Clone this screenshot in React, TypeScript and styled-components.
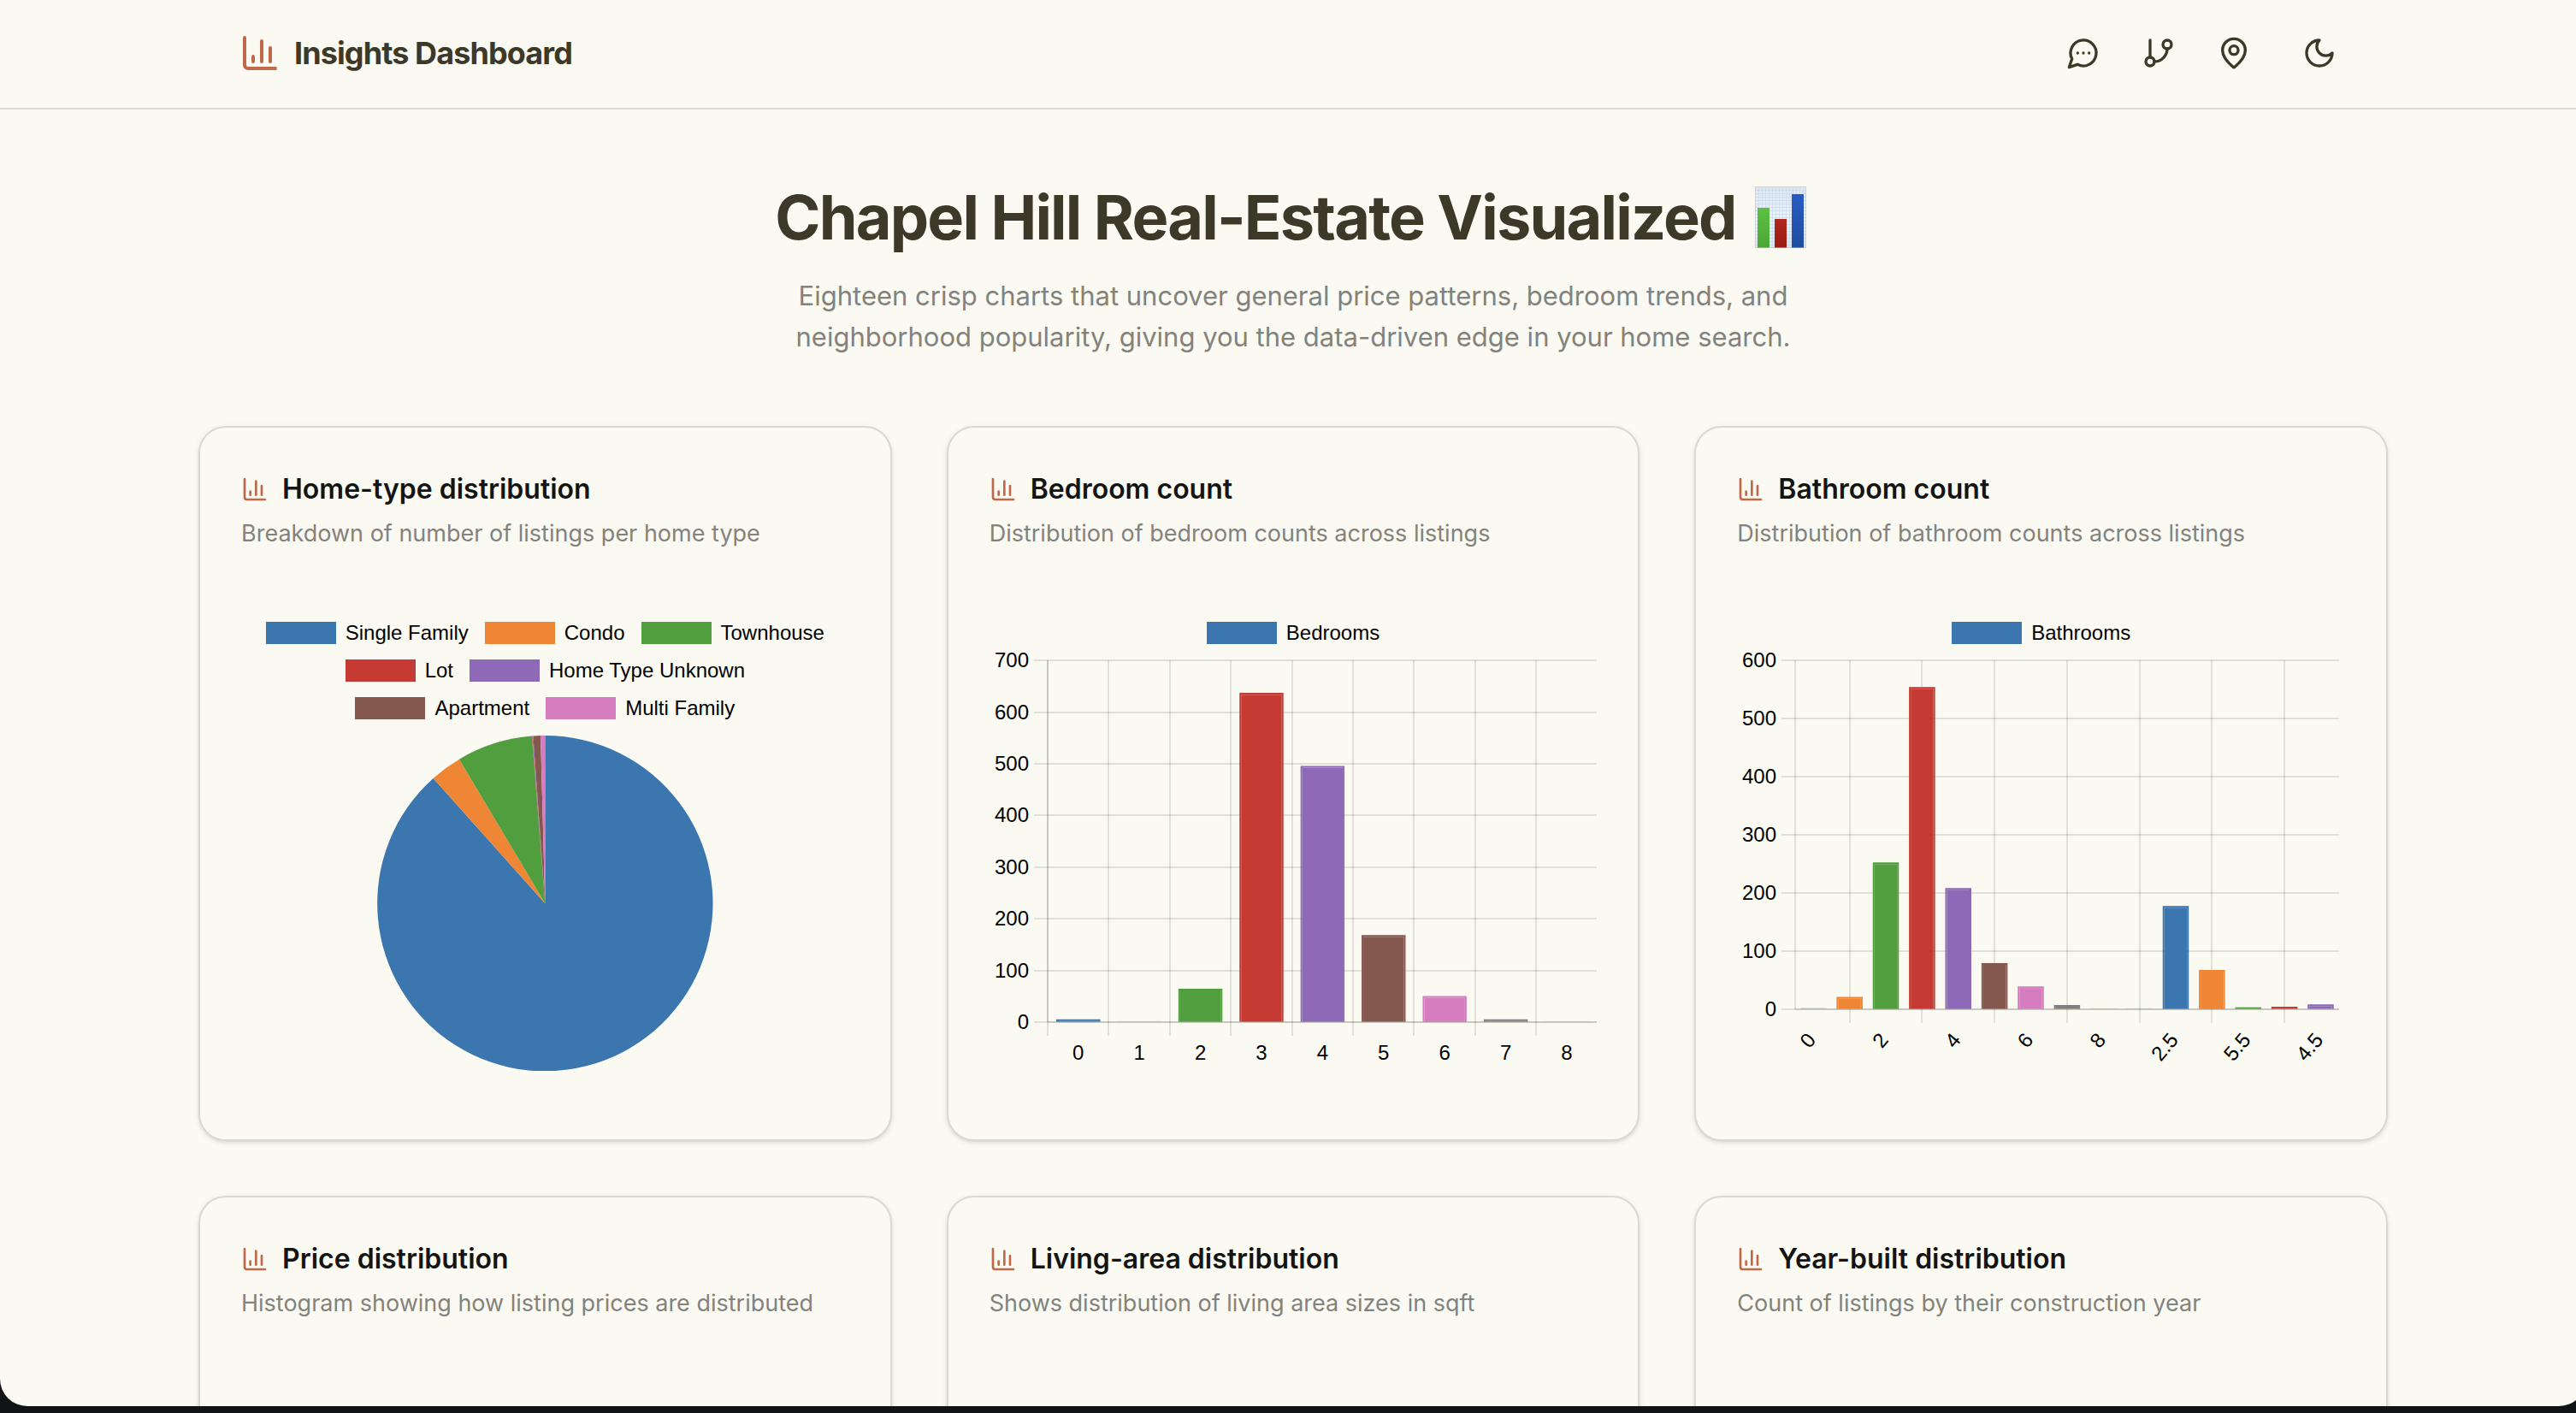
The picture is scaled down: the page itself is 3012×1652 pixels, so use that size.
import React from "react";
import styled, { createGlobalStyle } from "styled-components";

const color = {
  page: "#fafaf2",
  line: "#dad9d1",
  heading: "#3d3929",
  cardHeading: "#141413",
  muted: "#83827d",
  accent: "#c0694a",
};

const palette = [
  "#3b76af",
  "#ef8636",
  "#519e3e",
  "#c53a32",
  "#8d69b8",
  "#84584e",
  "#d57dbe",
  "#7f7f7f",
  "#bcbd45",
  "#56bbcc",
];

const GlobalStyle = createGlobalStyle`
  *, *::before, *::after { box-sizing: border-box; }
  html, body { margin: 0; }
  body {
    background: #111314;
    font-family: Inter, "Noto Sans", sans-serif;
    overflow: hidden;
  }
  h1, h2, p { margin: 0; }
`;

const Desktop = styled.div`
  height: 100vh;
  padding-bottom: 8px;
  overflow: hidden;
  background: #111314;
`;

const BrowserWindow = styled.div`
  width: calc(100% + 12px);
  height: 100%;
  overflow: hidden;
  border-radius: 0 0 32px 32px;
  background: ${color.page};
`;

const Header = styled.header`
  border-bottom: 2px solid ${color.line};
`;

const HeaderInner = styled.div`
  display: flex;
  align-items: center;
  justify-content: space-between;
  max-width: 2560px;
  margin: 0 auto;
  padding: 38px 48px 40px;
`;

const Brand = styled.a`
  display: flex;
  align-items: center;
  gap: 16px;
  color: ${color.heading};
  font-size: 36px;
  font-weight: 700;
  line-height: 48px;
  letter-spacing: -0.025em;
  text-decoration: none;
`;

const Nav = styled.nav`
  display: flex;
  align-items: center;
  gap: 48px;
`;

const NavLink = styled.a`
  display: flex;
  color: ${color.heading};
`;

const ThemeButton = styled.button`
  display: flex;
  padding: 0 12px;
  border: 0;
  background: none;
  color: ${color.heading};
  cursor: pointer;
`;

const Glyph = styled.svg<{ $size: number; $accent?: boolean }>`
  flex: none;
  width: ${(p) => p.$size}px;
  height: ${(p) => p.$size}px;
  color: ${(p) => (p.$accent ? color.accent : "inherit")};
  fill: none;
  stroke: currentColor;
  stroke-width: 2;
  stroke-linecap: round;
  stroke-linejoin: round;
`;

const Main = styled.main`
  max-width: 2560px;
  margin: 0 auto;
  padding-top: 86px;
`;

const Hero = styled.section`
  display: flex;
  flex-direction: column;
  align-items: center;
  gap: 28px;
  margin-bottom: 80px;
  text-align: center;
`;

const HeroTitle = styled.h1`
  display: flex;
  align-items: center;
  gap: 16px;
  color: ${color.heading};
  font-size: 72px;
  font-weight: 700;
  line-height: 80px;
  letter-spacing: -0.025em;
`;

const ChartEmoji = styled.svg`
  flex: none;
  width: 72px;
  height: 72px;
`;

const HeroText = styled.p`
  max-width: 1200px;
  color: ${color.muted};
  font-size: 31px;
  line-height: 48px;
`;

const CardGrid = styled.div`
  display: grid;
  grid-template-columns: repeat(3, minmax(0, 1fr));
  gap: 64px;
`;

const Card = styled.article`
  min-height: 836px;
  padding: 56px 48px 80px;
  border: 2px solid ${color.line};
  border-radius: 32px;
  background: ${color.page};
  box-shadow: 0 2px 6px rgba(0, 0, 0, 0.1), 0 2px 4px -2px rgba(0, 0, 0, 0.1);
`;

const CardTitle = styled.h2`
  display: flex;
  align-items: center;
  gap: 16px;
  margin-bottom: 16px;
  color: ${color.cardHeading};
  font-size: 32px;
  font-weight: 600;
  line-height: 32px;
`;

const CardText = styled.p`
  color: ${color.muted};
  font-size: 27px;
  line-height: 40px;
`;

const Figure = styled.figure`
  margin: 83px 0 0;
`;

const Legend = styled.ul`
  display: flex;
  flex-wrap: wrap;
  justify-content: center;
  gap: 18px 19px;
  margin: 0;
  padding: 0 20px;
  list-style: none;
`;

const LegendItem = styled.li<{ $color: string }>`
  display: flex;
  align-items: center;
  gap: 11px;
  color: #000;
  font-family: "Liberation Sans", Arial, sans-serif;
  font-size: 24px;
  line-height: 26px;

  &::before {
    content: "";
    width: 82px;
    height: 26px;
    background: ${(p) => p.$color};
  }
`;

const Plot = styled.svg<{ $spaced?: boolean }>`
  display: block;
  width: 100%;
  margin-top: ${(p) => (p.$spaced ? "19px" : "0")};
  overflow: hidden;

  text {
    fill: #000;
    font-family: "Liberation Sans", Arial, sans-serif;
    font-size: 24px;
  }
`;

const GridLine = styled.line<{ $strong?: boolean }>`
  stroke: rgba(0, 0, 0, ${(p) => (p.$strong ? 0.2 : 0.1)});
  stroke-width: 2;
  shape-rendering: crispEdges;
`;

function ColumnIcon({ size }: { size: number }) {
  return (
    <Glyph $size={size} $accent viewBox="0 0 24 24" aria-hidden="true">
      <path d="M3 3v16a2 2 0 0 0 2 2h16" />
      <path d="M18 17V9" />
      <path d="M13 17V5" />
      <path d="M8 17v-3" />
    </Glyph>
  );
}

function BarEmoji() {
  const rules = [4, 8, 12, 16, 20, 24, 28, 32, 36, 40, 44, 48, 52, 56, 60, 64, 68];
  return (
    <ChartEmoji viewBox="0 0 72 72" role="img" aria-label="bar chart">
      <defs>
        <linearGradient id="sheet" x1="0" y1="0" x2="0" y2="1">
          <stop offset="0" stopColor="#e2e6e8" />
          <stop offset="0.5" stopColor="#f0f3f8" />
          <stop offset="1" stopColor="#dfe3ea" />
        </linearGradient>
        <linearGradient id="green" x1="0" y1="0" x2="0" y2="1">
          <stop offset="0" stopColor="#5cc140" />
          <stop offset="1" stopColor="#4ca637" />
        </linearGradient>
        <linearGradient id="red" x1="0" y1="0" x2="0" y2="1">
          <stop offset="0" stopColor="#b0261c" />
          <stop offset="1" stopColor="#981c15" />
        </linearGradient>
        <linearGradient id="blue" x1="0" y1="0" x2="0" y2="1">
          <stop offset="0" stopColor="#285cc4" />
          <stop offset="1" stopColor="#1f4d9f" />
        </linearGradient>
      </defs>
      <rect x="6" y="0" width="60" height="72" fill="url(#sheet)" />
      <g stroke="#cfdeee" strokeWidth="1">
        {rules.map((y) => (
          <path key={y} d={`M6 ${y}.5H66`} />
        ))}
        {[10, 14, 18, 22, 26, 30, 34, 38, 42, 46, 50, 54, 58, 62].map((x) => (
          <path key={x} d={`M${x}.5 0V72`} />
        ))}
      </g>
      <rect x="6.5" y="0.5" width="59" height="71" fill="none" stroke="#d0d2d2" />
      <rect x="9" y="25" width="14" height="46.5" fill="url(#green)" />
      <rect x="29" y="38" width="14" height="33.5" fill="url(#red)" />
      <rect x="49" y="9" width="14" height="62.5" fill="url(#blue)" />
    </ChartEmoji>
  );
}

const homeTypes = [
  { name: "Single Family", share: 0.8839 },
  { name: "Condo", share: 0.0306 },
  { name: "Townhouse", share: 0.0729 },
  { name: "Lot", share: 0.0005 },
  { name: "Home Type Unknown", share: 0.0008 },
  { name: "Apartment", share: 0.007 },
  { name: "Multi Family", share: 0.0043 },
];

function PieChart() {
  const cx = 355;
  const r = 196;
  let turn = 0;
  const slices = homeTypes.map((t, i) => {
    const a0 = turn * 2 * Math.PI;
    turn += t.share;
    const a1 = turn * 2 * Math.PI;
    const at = (a: number) => `${cx + r * Math.sin(a)} ${r - r * Math.cos(a)}`;
    return (
      <path
        key={t.name}
        fill={palette[i]}
        d={`M${cx} ${r}L${at(a0)}A${r} ${r} 0 ${t.share > 0.5 ? 1 : 0} 1 ${at(a1)}Z`}
      />
    );
  });
  return (
    <Figure>
      <Legend>
        {homeTypes.map((t, i) => (
          <LegendItem key={t.name} $color={palette[i]}>
            {t.name}
          </LegendItem>
        ))}
      </Legend>
      <Plot $spaced viewBox="0 0 710 392" role="img" aria-label="Home types">
        {slices}
      </Plot>
    </Figure>
  );
}

type BarChartProps = {
  label: string;
  values: number[];
  ticks: string[];
  max: number;
  right: number;
  base: number;
  tilted?: boolean;
};

function BarChart({ label, values, ticks, max, right, base, tilted }: BarChartProps) {
  const left = 68;
  const top = 19;
  const column = (right - left) / values.length;
  const barWidth = column * 0.72;
  const yOf = (v: number) => base - (v / max) * (base - top);
  const levels = Array.from({ length: max / 100 + 1 }, (_, i) => i * 100);
  const columnLines = tilted
    ? [1.5, 3.5, 5.5, 7.5, 9.5, 11.5, 13.5]
    : values.map((_, i) => i + 1);

  return (
    <Figure>
      <Legend>
        <LegendItem $color={palette[0]}>{label}</LegendItem>
      </Legend>
      <Plot viewBox="0 0 710 499" role="img" aria-label={label}>
        {levels.slice(1).map((v) => (
          <GridLine key={v} x1={left - 16} x2={right} y1={yOf(v)} y2={yOf(v)} />
        ))}
        <GridLine x1={left - 16} x2={left} y1={base} y2={base} />
        {columnLines.map((n) => {
          const x = left + n * column;
          return <GridLine key={n} x1={x} x2={x} y1={top} y2={base + 16} />;
        })}
        <GridLine $strong={!tilted} x1={left} x2={left} y1={top} y2={base} />
        {!tilted && <GridLine x1={left} x2={left} y1={base} y2={base + 16} />}
        {values.map((v, i) => {
          const x0 = left + (i + 0.5) * column - barWidth / 2;
          const x1 = x0 + barWidth;
          const y = yOf(v);
          const b = base - 1;
          const fill = palette[i % palette.length];
          if (v < 3) {
            return (
              <rect
                key={i}
                x={x0}
                y={b - 1}
                width={barWidth}
                height={1}
                fill={fill}
                opacity={v * 0.15}
              />
            );
          }
          return (
            <g key={i} fill={fill}>
              {b - y > 2 && <path d={`M${x0 + 2} ${y + 2}H${x1 - 2}V${b}H${x0 + 2}Z`} />}
              {b - y > 2 ? (
                <path d={`M${x0} ${b}V${y}H${x1}V${b}H${x1 - 2}V${y + 2}H${x0 + 2}V${b}Z`} />
              ) : (
                <path d={`M${x0} ${b}V${y}H${x1}V${b}Z`} />
              )}
            </g>
          );
        })}
        <GridLine $strong x1={left} x2={right} y1={base} y2={base} />
        {levels.map((v) => (
          <text key={v} x={left - 22} y={yOf(v) + 8} textAnchor="end">
            {v}
          </text>
        ))}
        {ticks.map((t, i) => {
          const x = left + (tilted ? i * 2 + 0.5 : i + 0.5) * column;
          return tilted ? (
            <text key={t} textAnchor="end" transform={`translate(${x + 4} ${base + 36}) rotate(-50)`}>
              {t}
            </text>
          ) : (
            <text key={t} x={x} y={base + 44} textAnchor="middle">
              {t}
            </text>
          );
        })}
      </Plot>
    </Figure>
  );
}

type ChartCardProps = { title: string; text: string; children?: React.ReactNode };

function ChartCard({ title, text, children }: ChartCardProps) {
  return (
    <Card>
      <CardTitle>
        <ColumnIcon size={32} />
        {title}
      </CardTitle>
      <CardText>{text}</CardText>
      {children}
    </Card>
  );
}

export default function App() {
  return (
    <Desktop>
      <GlobalStyle />
      <BrowserWindow>
        <Header>
          <HeaderInner>
            <Brand href="#">
              <ColumnIcon size={48} />
              Insights Dashboard
            </Brand>
            <Nav>
              <NavLink href="#chat" aria-label="Chat">
                <Glyph $size={40} viewBox="0 0 24 24">
                  <path d="M7.9 20A9 9 0 1 0 4 16.1L2 22Z" />
                  <path d="M8 12h.01" />
                  <path d="M12 12h.01" />
                  <path d="M16 12h.01" />
                </Glyph>
              </NavLink>
              <NavLink href="#graph" aria-label="Graph">
                <Glyph $size={40} viewBox="0 0 24 24">
                  <path d="M6 3v12" />
                  <circle cx="18" cy="6" r="3" />
                  <circle cx="6" cy="18" r="3" />
                  <path d="M18 9a9 9 0 0 1-9 9" />
                </Glyph>
              </NavLink>
              <NavLink href="#map" aria-label="Map">
                <Glyph $size={40} viewBox="0 0 24 24">
                  <path d="M20 10c0 4.993-5.539 10.193-7.399 11.799a1 1 0 0 1-1.202 0C9.539 20.193 4 14.993 4 10a8 8 0 0 1 16 0" />
                  <circle cx="12" cy="10" r="3" />
                </Glyph>
              </NavLink>
              <ThemeButton type="button" aria-label="Toggle theme">
                <Glyph $size={40} viewBox="0 0 24 24">
                  <path d="M12 3a6 6 0 0 0 9 9 9 9 0 1 1-9-9Z" />
                </Glyph>
              </ThemeButton>
            </Nav>
          </HeaderInner>
        </Header>

        <Main>
          <Hero>
            <HeroTitle>
              Chapel Hill Real-Estate Visualized
              <BarEmoji />
            </HeroTitle>
            <HeroText>
              Eighteen crisp charts that uncover general price patterns, bedroom trends, and
              neighborhood popularity, giving you the data-driven edge in your home search.
            </HeroText>
          </Hero>

          <CardGrid>
            <ChartCard
              title="Home-type distribution"
              text="Breakdown of number of listings per home type"
            >
              <PieChart />
            </ChartCard>
            <ChartCard title="Bedroom count" text="Distribution of bedroom counts across listings">
              <BarChart
                label="Bedrooms"
                values={[6, 1, 65, 637, 496, 169, 51, 6, 1]}
                ticks={["0", "1", "2", "3", "4", "5", "6", "7", "8"]}
                max={700}
                right={710}
                base={442}
              />
            </ChartCard>
            <ChartCard title="Bathroom count" text="Distribution of bathroom counts across listings">
              <BarChart
                label="Bathrooms"
                values={[2, 22, 253, 554, 209, 80, 40, 8, 1, 1, 178, 68, 4, 5, 9]}
                ticks={["0", "2", "4", "6", "8", "2.5", "5.5", "4.5"]}
                max={600}
                right={703}
                base={427}
                tilted
              />
            </ChartCard>
            <ChartCard
              title="Price distribution"
              text="Histogram showing how listing prices are distributed"
            />
            <ChartCard
              title="Living-area distribution"
              text="Shows distribution of living area sizes in sqft"
            />
            <ChartCard
              title="Year-built distribution"
              text="Count of listings by their construction year"
            />
          </CardGrid>
        </Main>
      </BrowserWindow>
    </Desktop>
  );
}
